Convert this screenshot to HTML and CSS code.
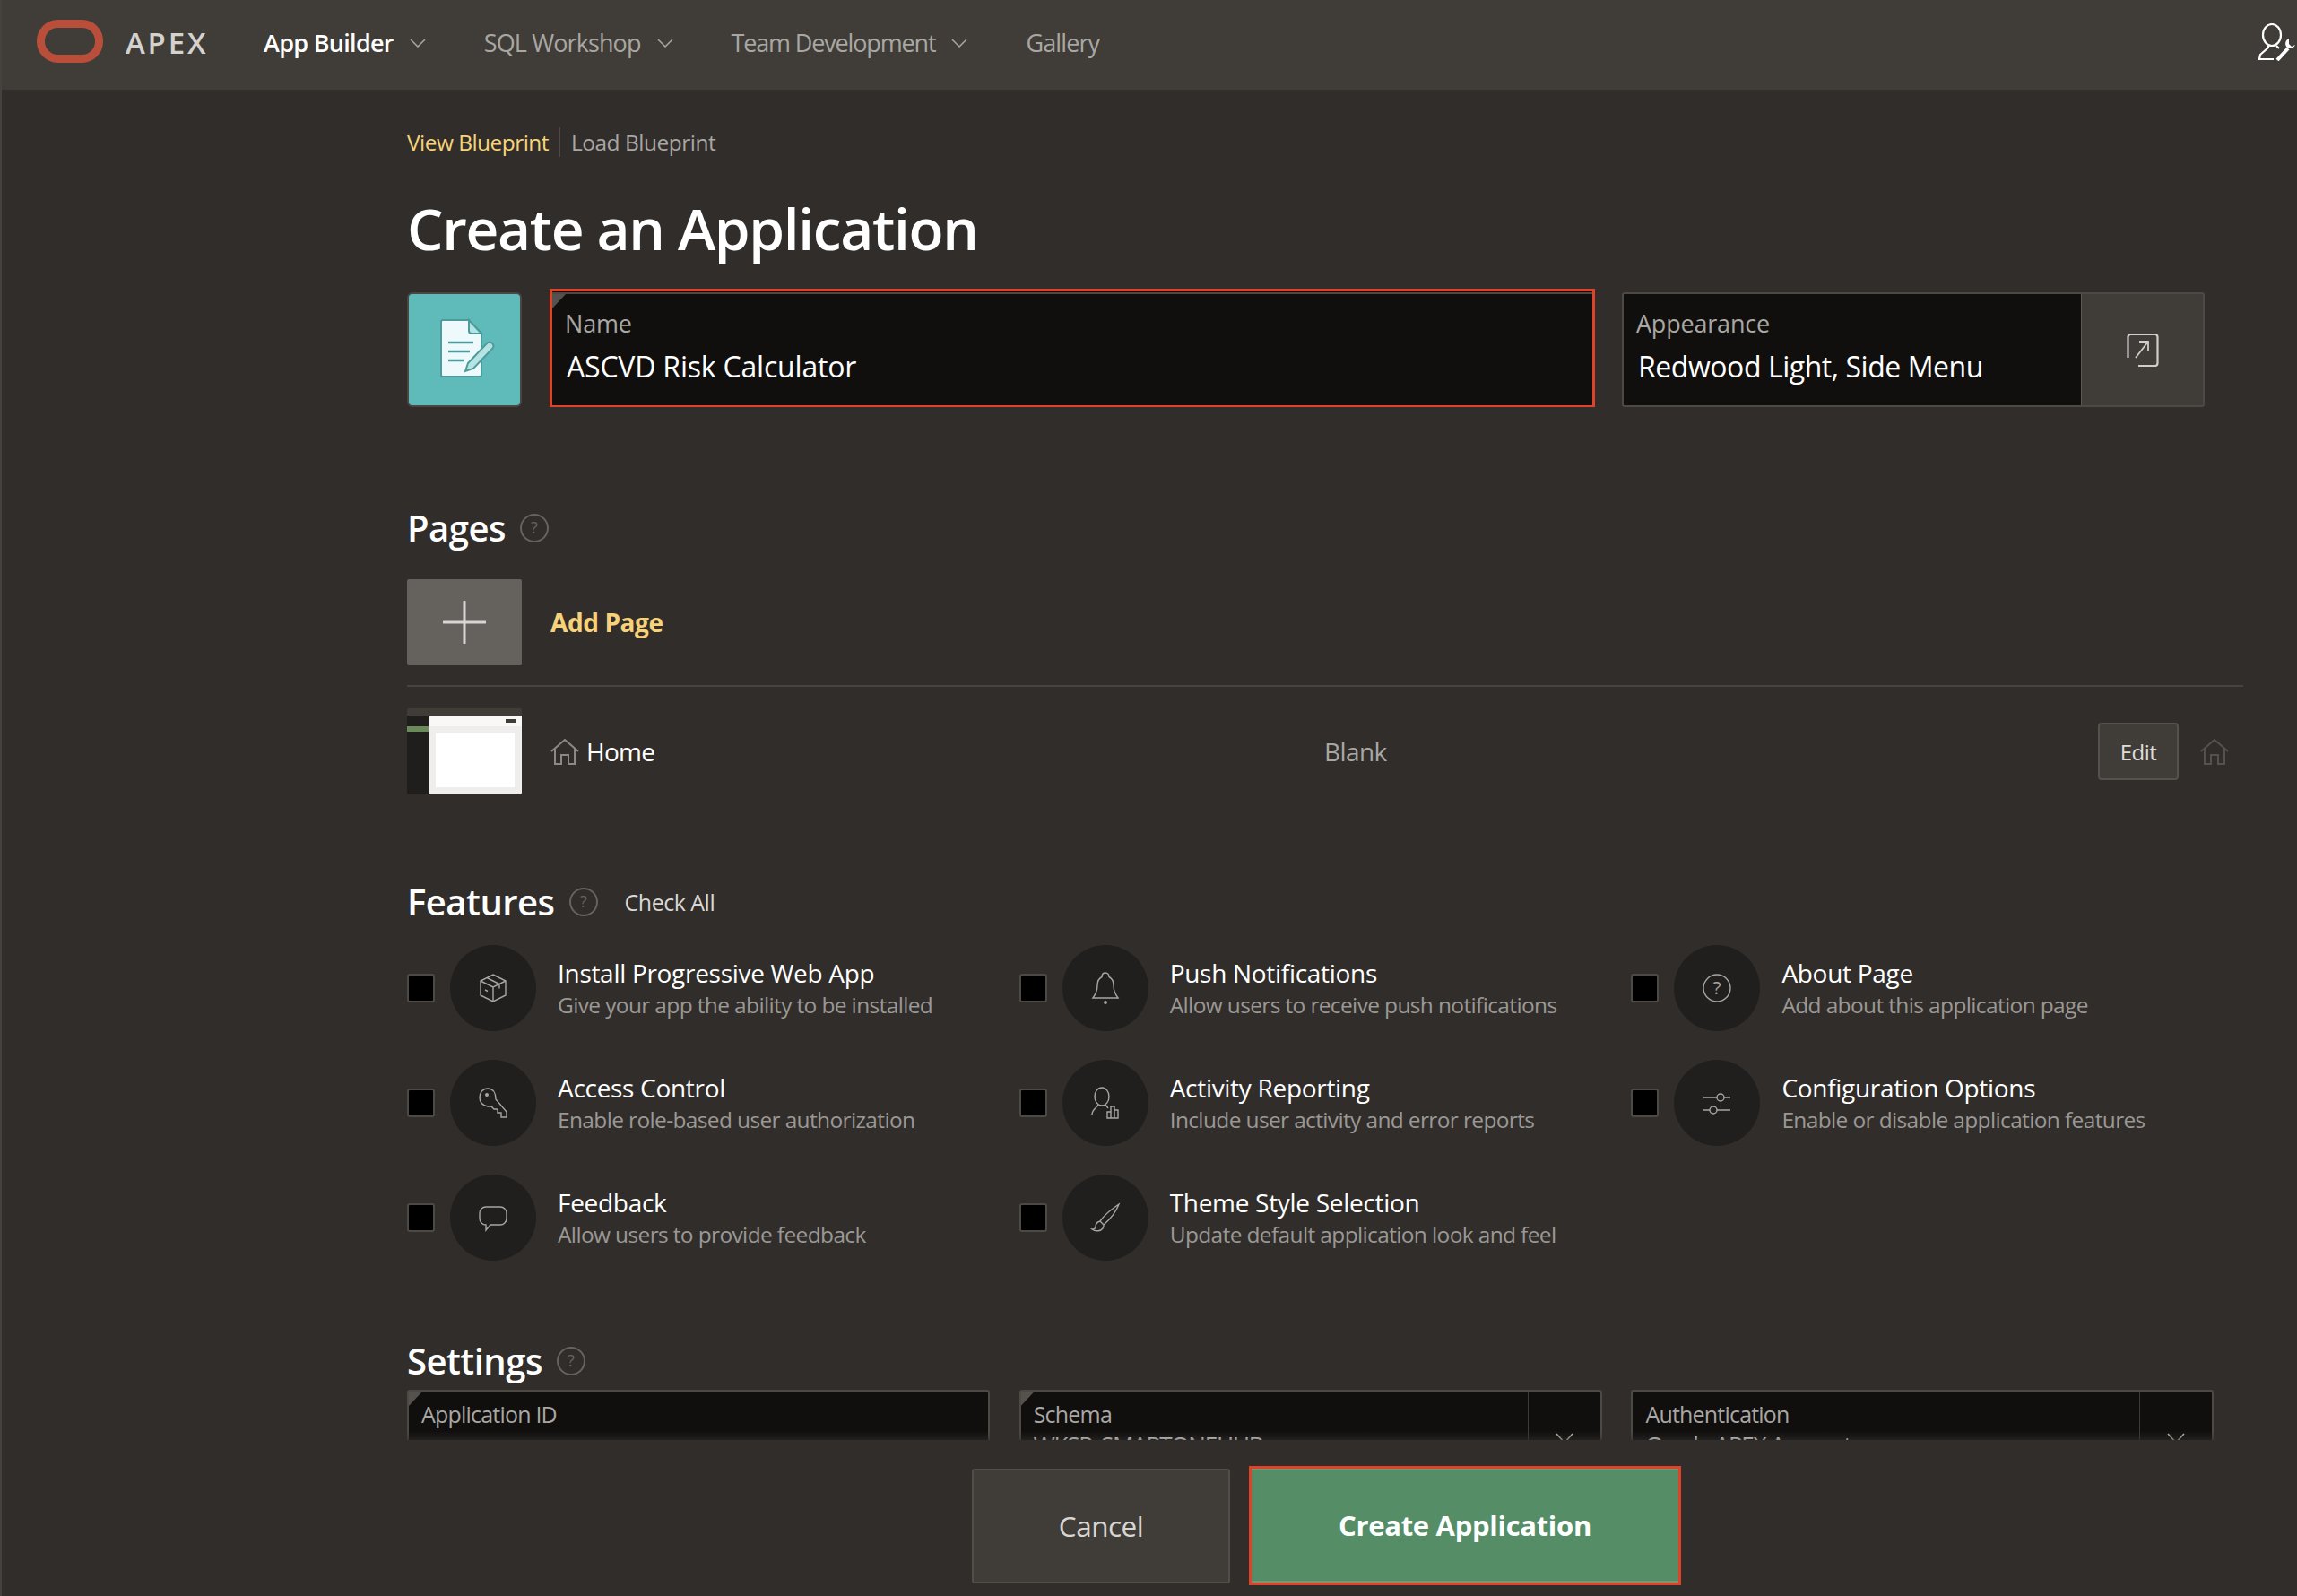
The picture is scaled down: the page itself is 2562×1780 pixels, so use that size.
FILE: index.html
```html
<!DOCTYPE html>
<html lang="en">
<head>
<meta charset="utf-8">
<title>Create an Application</title>
<link rel="stylesheet" href="styles.css">
</head>
<body>
<div class="page">
  <header class="topbar">
    <svg class="logo" width="74" height="48" viewBox="0 0 74 48"><rect x="4.5" y="4.5" width="65" height="39" rx="19" fill="none" stroke="#b94f3b" stroke-width="9"/></svg>
    <span class="brand">APEX</span>
    <nav class="nav">
      <a class="nav-item nav-active">App Builder <svg class="chev" width="18" height="10" viewBox="0 0 18 10"><path d="M1 1l8 8 8-8" fill="none" stroke="currentColor" stroke-width="1.5"/></svg></a>
      <a class="nav-item">SQL Workshop <svg class="chev" width="18" height="10" viewBox="0 0 18 10"><path d="M1 1l8 8 8-8" fill="none" stroke="currentColor" stroke-width="1.5"/></svg></a>
      <a class="nav-item nav-team">Team Development <svg class="chev" width="18" height="10" viewBox="0 0 18 10"><path d="M1 1l8 8 8-8" fill="none" stroke="currentColor" stroke-width="1.5"/></svg></a>
      <a class="nav-item">Gallery</a>
    </nav>
    <svg class="user-icon" width="44" height="42" viewBox="0 0 44 42" fill="none" stroke="#fff" stroke-width="2.2"><ellipse cx="16" cy="13" rx="10" ry="12"/><path d="M12 25v2L3 35l-1 5h16M21 25l3 3"/><path d="M22 41l12-13" stroke-width="4"/><path d="M35 17a6 6 0 0 0-2 10 6 6 0 0 0 9-3l-4 2-3-3z" fill="#fff" stroke="none"/></svg>
  </header>

  <main class="main">
    <div class="content">
      <div class="tabs">
        <a class="tab tab-current">View Blueprint</a>
        <a class="tab">Load Blueprint</a>
      </div>
      <h1 class="title">Create an Application</h1>

      <div class="app-row">
        <div class="app-icon">
          <svg width="64" height="70" viewBox="0 0 64 70" fill="none"><path d="M4 2h29l14 15v46a2 2 0 0 1-2 2H4a2 2 0 0 1-2-2V4a2 2 0 0 1 2-2z" fill="#eef9fb" stroke="#4e9b9b" stroke-width="2"/><path d="M33 2l14 15H36a3 3 0 0 1-3-3z" fill="#b6e3e3" stroke="#4e9b9b" stroke-width="2"/><path d="M10 27h28M10 37h24M10 47h18" stroke="#4e9b9b" stroke-width="2.5"/><path d="M29 59l3-9 21-22c2-2 4-2 6 0s2 4 0 6L38 56z" fill="#b6e3e3" stroke="#4e9b9b" stroke-width="2"/></svg>
        </div>
        <div class="field field-focus field-required">
          <span class="field-label">Name</span>
          <span class="field-value">ASCVD Risk Calculator</span>
        </div>
        <div class="field field-appearance">
          <div class="field-text">
            <span class="field-label">Appearance</span>
            <span class="field-value field-value-tight">Redwood Light, Side Menu</span>
          </div>
          <div class="field-action">
            <svg width="36" height="38" viewBox="0 0 36 38" fill="none" stroke="#d0cecb" stroke-width="2.2"><path d="M1.5 28V5a3 3 0 0 1 3-3h27a3 3 0 0 1 3 3v29a3 3 0 0 1-3 3H13"/><path d="M10 28L24 10M14 10h10v11" stroke-width="1.8"/></svg>
          </div>
        </div>
      </div>

      <div class="section-head section-pages">
        <h2 class="section-title">Pages</h2>
        <svg class="help" width="32" height="32" viewBox="0 0 32 32"><circle cx="16" cy="16" r="15" fill="none" stroke="#666360" stroke-width="2"/><text x="16" y="22" text-anchor="middle" class="help-q">?</text></svg>
      </div>

      <div class="add-row">
        <div class="add-box"><svg width="48" height="48" viewBox="0 0 48 48"><path d="M24 1v46M1 24h46" stroke="#d8d6d3" stroke-width="3" stroke-linecap="round"/></svg></div>
        <a class="add-label">Add Page</a>
      </div>
      <div class="divider"></div>

      <div class="page-row">
        <div class="thumb">
          <div class="thumb-top"></div>
          <div class="thumb-body">
            <div class="thumb-side"><div class="thumb-sel"></div></div>
            <div class="thumb-main">
              <div class="thumb-head"><span class="thumb-btn"></span></div>
              <div class="thumb-wrap"><div class="thumb-card"></div></div>
            </div>
          </div>
        </div>
        <div class="page-name">
          <svg width="32" height="29" viewBox="0 0 32 29" fill="none" stroke="#8b8986" stroke-width="2"><path d="M1 14L16 1l15 13M5 11v17h7V18h8v10h7V11"/></svg>
          <span>Home</span>
        </div>
        <div class="page-type">Blank</div>
        <button class="edit-btn">Edit</button>
        <svg class="home-off" width="32" height="29" viewBox="0 0 32 29" fill="none" stroke="#55524e" stroke-width="2"><path d="M1 14L16 1l15 13M5 11v17h7V18h8v10h7V11"/></svg>
      </div>

      <div class="section-head section-features">
        <h2 class="section-title">Features</h2>
        <svg class="help" width="32" height="32" viewBox="0 0 32 32"><circle cx="16" cy="16" r="15" fill="none" stroke="#666360" stroke-width="2"/><text x="16" y="22" text-anchor="middle" class="help-q">?</text></svg>
        <a class="check-all">Check All</a>
      </div>

      <div class="features">
        <div class="feature"><span class="check"></span><span class="circle"><svg width="40" height="40" viewBox="0 0 40 40" fill="none" stroke="#a8a6a2" stroke-width="1.4"><path d="M20 5l14 7v16l-14 7-14-7V12zM6 12l14 7 14-7M20 19v16M13 8.500l14 7v5"/><path d="M11 22l3 1.500"/></svg></span><div class="ftext"><div class="ftitle">Install Progressive Web App</div><div class="fdesc">Give your app the ability to be installed</div></div></div>
        <div class="feature"><span class="check"></span><span class="circle"><svg width="40" height="40" viewBox="0 0 40 40" fill="none" stroke="#a8a6a2" stroke-width="1.4"><path d="M20 3c-2.500 0-4 2-4 4.500C12 9.500 11 13 11 17c0 6-2 10-5 14h28c-3-4-5-8-5-14 0-4-1-7.500-5-9.500C24 5 22.500 3 20 3z"/><circle cx="20" cy="36" r="1.200" fill="#a8a6a2"/></svg></span><div class="ftext"><div class="ftitle">Push Notifications</div><div class="fdesc">Allow users to receive push notifications</div></div></div>
        <div class="feature"><span class="check"></span><span class="circle"><svg width="40" height="40" viewBox="0 0 40 40" fill="none" stroke="#a8a6a2" stroke-width="1.4"><circle cx="20" cy="20" r="15"/><text x="20" y="27" text-anchor="middle" class="circle-q">?</text></svg></span><div class="ftext"><div class="ftitle">About Page</div><div class="fdesc">Add about this application page</div></div></div>

        <div class="feature"><span class="check"></span><span class="circle"><svg width="40" height="40" viewBox="0 0 40 40" fill="none" stroke="#a8a6a2" stroke-width="1.4"><path d="M14 4C8 4 5 9 5 14c0 6 4 9 9 10h4l3 3h4v4h4v5h6v-6L23 16c0-7-3-12-9-12z"/><circle cx="13" cy="11" r="1.300" fill="#a8a6a2"/></svg></span><div class="ftext"><div class="ftitle">Access Control</div><div class="fdesc">Enable role-based user authorization</div></div></div>
        <div class="feature"><span class="check"></span><span class="circle"><svg width="40" height="40" viewBox="0 0 40 40" fill="none" stroke="#a8a6a2" stroke-width="1.4"><ellipse cx="16" cy="13" rx="8" ry="10"/><path d="M12 22c-1 3-7 5-7 11M20 22l3 4"/><path d="M22 37v-7h4v7zM26 37V24h4v13zM30 37v-9h4v9z"/></svg></span><div class="ftext"><div class="ftitle">Activity Reporting</div><div class="fdesc">Include user activity and error reports</div></div></div>
        <div class="feature"><span class="check"></span><span class="circle"><svg width="40" height="40" viewBox="0 0 40 40" fill="none" stroke="#a8a6a2" stroke-width="1.4"><path d="M5 14h15M28 14h7M5 28h7M20 28h15"/><circle cx="24" cy="14" r="4"/><circle cx="16" cy="28" r="4"/></svg></span><div class="ftext"><div class="ftitle">Configuration Options</div><div class="fdesc">Enable or disable application features</div></div></div>

        <div class="feature"><span class="check"></span><span class="circle"><svg width="40" height="40" viewBox="0 0 40 40" fill="none" stroke="#a8a6a2" stroke-width="1.4"><path d="M12 8h16a7 7 0 0 1 7 7v6a7 7 0 0 1-7 7H17l-5 6v-6a7 7 0 0 1-7-7v-6a7 7 0 0 1 7-7z"/></svg></span><div class="ftext"><div class="ftitle">Feedback</div><div class="fdesc">Allow users to provide feedback</div></div></div>
        <div class="feature"><span class="check"></span><span class="circle"><svg width="40" height="40" viewBox="0 0 40 40" fill="none" stroke="#a8a6a2" stroke-width="1.4"><path d="M35 5c-6 4-15 10-21 19l4 4c7-6 14-15 17-23zM14 24c-4 1-5 3-5 6 0 2-2 3-4 3 4 3 10 2 12-1 1-1 1-3 1-4"/></svg></span><div class="ftext"><div class="ftitle">Theme Style Selection</div><div class="fdesc">Update default application look and feel</div></div></div>
      </div>

      <div class="section-head section-settings">
        <h2 class="section-title">Settings</h2>
        <svg class="help" width="32" height="32" viewBox="0 0 32 32"><circle cx="16" cy="16" r="15" fill="none" stroke="#666360" stroke-width="2"/><text x="16" y="22" text-anchor="middle" class="help-q">?</text></svg>
      </div>

      <div class="settings">
        <div class="sfield field-required"><div class="sfield-text"><span class="sfield-label">Application ID</span></div></div>
        <div class="sfield field-required"><div class="sfield-text"><span class="sfield-label">Schema</span><span class="sfield-value">WKSP_SMARTONEHUB</span></div><div class="sfield-btn"><svg width="20" height="12" viewBox="0 0 20 12"><path d="M1 1l9 10 9-10" fill="none" stroke="#c9c7c4" stroke-width="1.600"/></svg></div></div>
        <div class="sfield"><div class="sfield-text"><span class="sfield-label">Authentication</span><span class="sfield-value">Oracle APEX Accounts</span></div><div class="sfield-btn"><svg width="20" height="12" viewBox="0 0 20 12"><path d="M1 1l9 10 9-10" fill="none" stroke="#c9c7c4" stroke-width="1.600"/></svg></div></div>
      </div>
      <div class="fade"></div>
    </div>
  </main>

  <footer class="footer">
    <button class="btn-cancel">Cancel</button>
    <button class="btn-create">Create Application</button>
  </footer>
</div>
</body>
</html>
```

FILE: styles.css
```css
* { box-sizing: border-box; }
html, body { margin: 0; padding: 0; height: 100%; }
body { background: #312d2a; color: #fff; font-family: "Open Sans", "Noto Sans", sans-serif; overflow: hidden; }
a { text-decoration: none; }
button { font-family: inherit; cursor: pointer; }
h1, h2 { margin: 0; }

.page { display: flex; flex-direction: column; height: 1780px; width: 2562px; overflow: hidden; border-left: 2px solid #45423e; }

.topbar { height: 100px; flex: none; background: #403d38; display: flex; align-items: center; padding-left: 39px; }
.logo { flex: none; margin-top: -8px; }
.brand { font-size: 33px; font-weight: 600; letter-spacing: 2.800px; color: #d4d2cf; margin-left: 25px; margin-top: -6px; width: 154px; }
.nav { display: flex; align-items: center; gap: 65px; font-size: 27px; letter-spacing: -0.900px; margin-top: -6px; }
.nav-item { display: flex; align-items: center; gap: 18px; color: #a9a7a3; }
.nav-active { color: #fff; font-weight: 600; letter-spacing: -0.700px; }
.nav-team { letter-spacing: -1.150px; }
.chev { color: #a9a7a3; margin-top: 2px; }
.user-icon { margin-left: auto; margin-top: -6px; flex: none; }

.main { flex: 1; min-height: 0; overflow: hidden; padding-left: 452px; }
.content { width: 2048px; position: relative; height: 100%; padding-top: 42px; }

.tabs { display: flex; align-items: center; height: 33px; }
.tab { font-size: 24.500px; letter-spacing: -0.550px; color: #a9a7a3; padding-right: 12px; }
.tab + .tab { border-left: 1px solid #4d4a46; padding-left: 12px; line-height: 33px; letter-spacing: -0.500px; }
.tab-current { color: #f7d479; }

.title { font-size: 64px; font-weight: 600; line-height: 80px; margin-top: 40px; letter-spacing: -1.350px; color: #fff; }

.app-row { display: flex; align-items: flex-end; margin-top: 27px; }
.app-icon { width: 128px; height: 128px; flex: none; background: #5fbaba; border: 2px solid #4a4743; border-radius: 6px; display: flex; align-items: center; justify-content: center; padding-left: 8px; }
.field { background: #100f0e; position: relative; display: flex; }
.field-focus { width: 1166px; height: 132px; margin-left: 31px; flex-direction: column; border: 3px solid #dc4329; border-bottom-width: 2px; padding: 0 14px; }
.field-focus::after { content: ""; position: absolute; left: 0; right: 0; top: 1px; height: 2px; background: #4d4a46; }
.field-required::before { content: ""; position: absolute; left: 0; top: 0; width: 15px; height: 16px; background: #55524e; clip-path: polygon(0 0, 100% 0, 0 100%); z-index: 1; }
.field-focus.field-required::before { top: 3px; }
.field-label { display: block; font-size: 27px; line-height: 34px; letter-spacing: -0.200px; color: #a9a7a3; margin-top: 19px; }
.field-value { display: block; font-size: 32px; line-height: 40px; letter-spacing: -0.200px; color: #fff; margin-top: 11px; padding-left: 2px; }
.field-value-tight { letter-spacing: -0.450px; }
.field-appearance { width: 650px; height: 128px; margin-left: 30px; border: 2px solid #4d4a46; border-radius: 3px; }
.field-text { width: 510px; flex: none; padding: 0 14px; }
.field-text .field-label { margin-top: 16px; }
.field-action { flex: 1; background: #403d38; border-left: 1px solid #5d5a56; display: flex; align-items: center; justify-content: center; }

.section-head { display: flex; align-items: center; height: 40px; gap: 16px; }
.section-title { font-size: 40px; line-height: 40px; font-weight: 600; letter-spacing: -0.500px; color: #fff; }
.help-q { font-size: 18px; fill: #666360; font-family: "Open Sans", sans-serif; }
.circle-q { font-size: 20px; fill: #a8a6a2; stroke: none; font-family: "Open Sans", sans-serif; }
.section-pages { margin-top: 115px; }
.section-features { margin-top: 100px; }
.section-settings { margin-top: 92px; }
.check-all { font-size: 25px; letter-spacing: -0.500px; color: #d9d7d4; margin-left: 14px; }

.add-row { display: flex; align-items: center; gap: 32px; margin-top: 37px; }
.add-box { width: 128px; height: 96px; background: #65625d; border-radius: 2px; display: flex; align-items: center; justify-content: center; }
.add-label { font-size: 28px; font-weight: 700; letter-spacing: -0.400px; color: #f7d27a; }
.divider { height: 2px; background: #47443f; margin-top: 22px; }

.page-row { display: flex; align-items: center; margin-top: 24px; height: 96px; }
.thumb { width: 128px; height: 96px; flex: none; display: flex; flex-direction: column; border-radius: 2px; overflow: hidden; }
.thumb-top { height: 8px; background: #403d38; }
.thumb-body { flex: 1; display: flex; }
.thumb-side { width: 24px; background: #1f1e1c; padding-top: 12px; }
.thumb-sel { height: 6px; background: #6b8a5c; }
.thumb-main { flex: 1; background: #f0eeec; display: flex; flex-direction: column; }
.thumb-head { height: 12px; background: #f9f8f6; display: flex; justify-content: flex-end; align-items: center; padding-right: 6px; }
.thumb-btn { width: 12px; height: 4px; background: #403d38; }
.thumb-wrap { flex: 1; padding: 8px; }
.thumb-card { height: 100%; background: #fff; }
.page-name { width: 863px; margin-left: 32px; flex: none; display: flex; align-items: center; gap: 8px; font-size: 28px; letter-spacing: -0.700px; color: #fff; }
.page-type { font-size: 28px; letter-spacing: -0.600px; color: #a9a7a3; flex: 1; }
.edit-btn { width: 90px; height: 64px; flex: none; background: #403d38; border: 2px solid #55524e; border-radius: 4px; color: #dedcd9; font-size: 24px; letter-spacing: -0.500px; padding: 0; }
.home-off { flex: none; margin-left: 24px; margin-right: 16px; }

.features { display: grid; grid-template-columns: repeat(3, 682.700px); row-gap: 32px; margin-top: 28px; }
.feature { display: flex; align-items: center; height: 96px; }
.check { width: 31px; height: 32px; flex: none; background: #000; border: 2px solid #4d4a46; border-radius: 3px; }
.circle { width: 96px; height: 96px; flex: none; margin-left: 17px; background: #201f1d; border-radius: 50%; display: flex; align-items: center; justify-content: center; }
.ftext { margin-left: 24px; }
.ftitle { font-size: 28px; line-height: 38px; letter-spacing: -0.300px; color: #fff; }
.fdesc { font-size: 24.500px; line-height: 34px; letter-spacing: -0.640px; color: #9a9894; }

.settings { display: grid; grid-template-columns: repeat(3, 682.700px); margin-top: 12px; }
.sfield { width: 650px; height: 128px; background: #100f0e; border: 2px solid #4d4a46; border-radius: 3px; position: relative; display: flex; }
.sfield-text { flex: 1; padding: 0 14px; }
.sfield-label { display: block; font-size: 25px; line-height: 34px; letter-spacing: -0.800px; color: #a9a7a3; margin-top: 8px; }
.sfield-value { display: block; font-size: 26px; line-height: 36px; letter-spacing: -1.200px; color: #fff; margin-top: -1px; }
.sfield-btn { width: 81px; flex: none; border-left: 1px solid #3c3a37; display: flex; justify-content: center; padding-top: 46px; }

.fade { position: absolute; left: 0; right: 0; bottom: 0; height: 10px; background: linear-gradient(to bottom, rgba(49,45,42,0), rgba(49,45,42,.55)); }

.footer { height: 174px; flex: none; background: #312d2a; padding-left: 452px; display: flex; align-items: flex-start; padding-top: 29px; }
.btn-cancel { width: 288px; height: 128px; margin-left: 630px; margin-top: 3px; background: #403d38; border: 2px solid #514e4a; border-radius: 3px; color: #d8d6d3; font-size: 31.500px; letter-spacing: -0.500px; padding: 0 0 2px; }
.btn-create { width: 482px; height: 133px; margin-left: 21px; background: #558e66; border: 3px solid #dc4329; color: #fff; font-size: 31px; font-weight: 700; letter-spacing: -0.300px; padding: 0 0 2px; box-shadow: inset 0 2px 0 #6a9c78, inset 0 -2px 0 #6a9c78; }
```
